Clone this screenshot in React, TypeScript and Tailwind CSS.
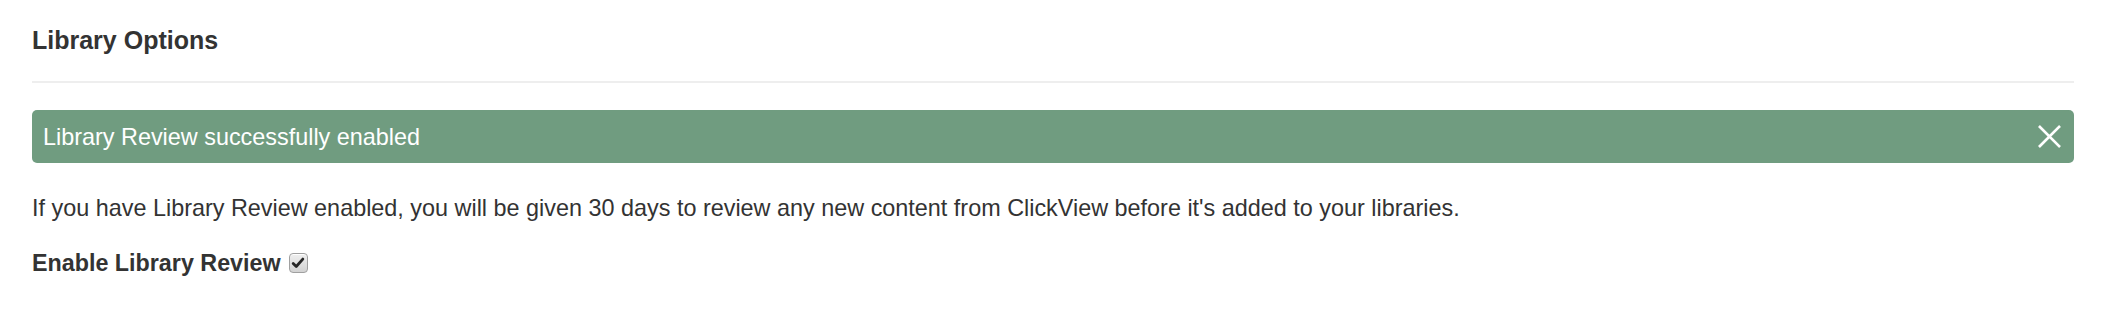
import React from 'react'

const font = { fontFamily: '"Liberation Sans", Arial, Helvetica, sans-serif' }

const CheckBox = () => (
  <span className="inline-flex h-[20px] w-[19px] items-center justify-center rounded-[4px] border border-[#a0a0a0] bg-gradient-to-b from-[#f0f0f0] to-[#d2d2d2] shadow-[inset_0_1px_0_#fff]">
    <svg viewBox="0 0 16 16" className="h-[14px] w-[14px]">
      <path d="M2.5 8.5 L6 12 L13.5 3.5" fill="none" stroke="#262626" strokeWidth="3.2" strokeLinecap="round" strokeLinejoin="round" />
    </svg>
  </span>
)

export default function App() {
  return (
    <div className="min-h-[320px] w-[2120px] bg-white pl-[32px] pr-[46px] pt-[22px] text-[#333]" style={font}>
      <h3 className="text-[25px] font-bold leading-[36px]">Library Options</h3>
      <div className="mt-[23px] border-b-2 border-[#eeeeee]" />

      <div className="mt-[27px] flex h-[53px] items-center justify-between rounded-[5px] bg-[#709c80] pl-[11px] pr-[10px] text-white">
        <span className="pt-[3px] text-[23.4px] leading-none">Library Review successfully enabled</span>
        <button className="flex h-[30px] w-[30px] items-center justify-center">
          <svg viewBox="0 0 24 24" className="h-[23px] w-[23px]">
            <path d="M2 2 L22 22 M22 2 L2 22" stroke="#fff" strokeWidth="2.8" strokeLinecap="square" />
          </svg>
        </button>
      </div>

      <p className="mt-[28px] text-[23.4px] leading-[34px]">
        If you have Library Review enabled, you will be given 30 days to review any new content from ClickView before it's added to your libraries.
      </p>

      <label className="mt-[21px] flex items-center gap-[8px] text-[23.3px] font-bold leading-[34px]">
        Enable Library Review
        <CheckBox />
      </label>
    </div>
  )
}
